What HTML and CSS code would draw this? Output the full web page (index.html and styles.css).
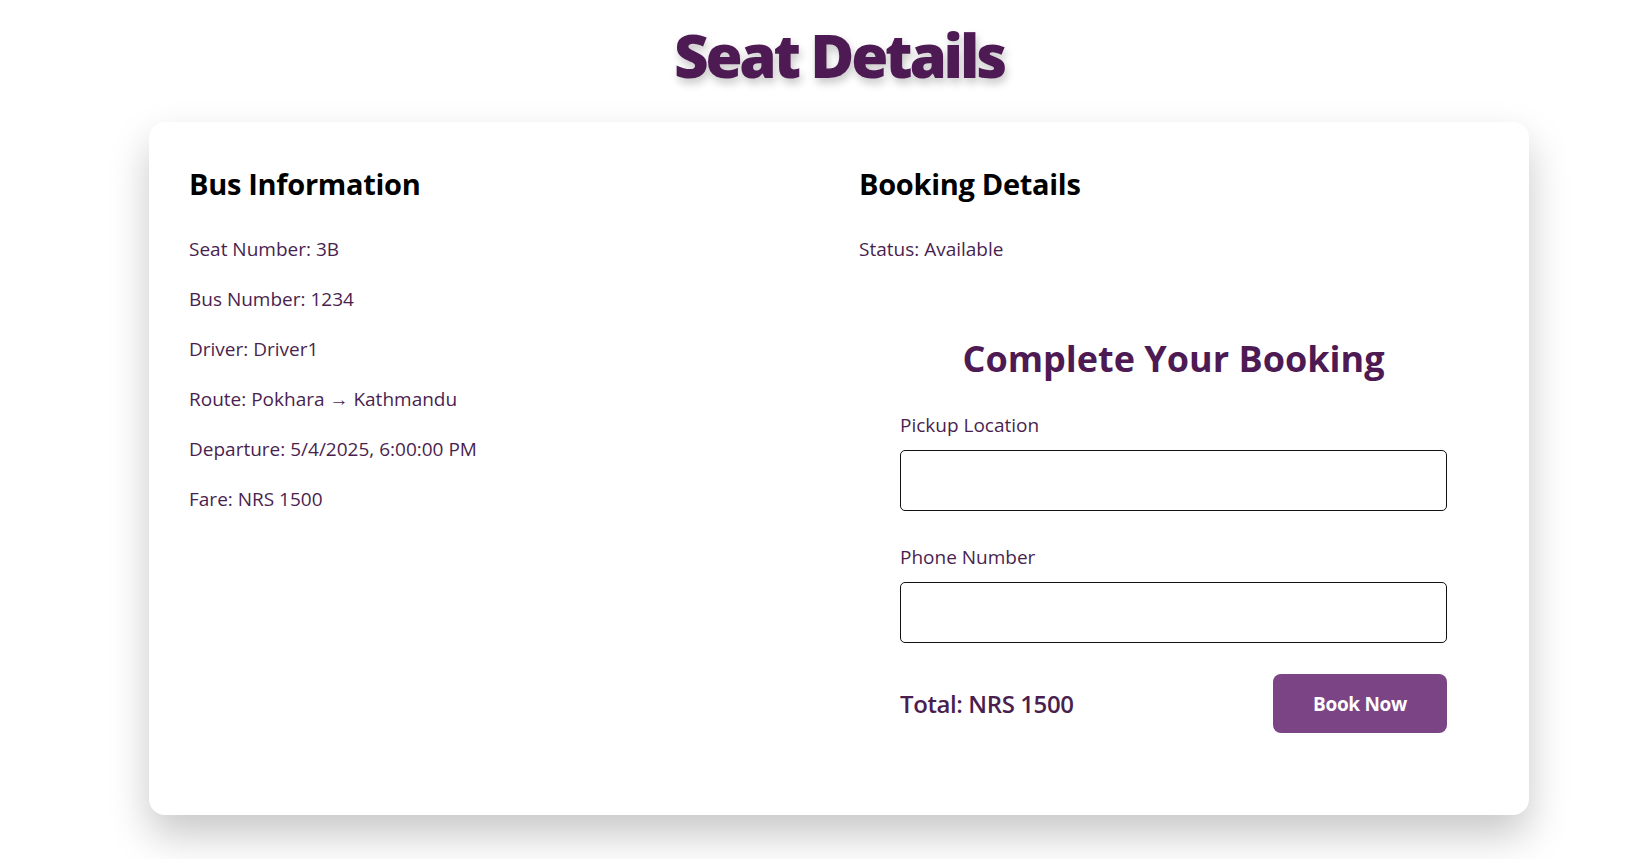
FILE: index.html
```html
<!DOCTYPE html>
<html lang="en">
<head>
<meta charset="utf-8">
<title>Seat Details</title>
<link rel="stylesheet" href="styles.css">
</head>
<body>
<div class="page">
  <h1 class="page-title">Seat Details</h1>
  <div class="card">
    <section class="col">
      <h2 class="col-title">Bus Information</h2>
      <p class="info">Seat Number: 3B</p>
      <p class="info">Bus Number: 1234</p>
      <p class="info">Driver: Driver1</p>
      <p class="info">Route: Pokhara → Kathmandu</p>
      <p class="info">Departure: 5/4/2025, 6:00:00 PM</p>
      <p class="info">Fare: NRS 1500</p>
    </section>
    <section class="col">
      <h2 class="col-title">Booking Details</h2>
      <p class="info">Status: Available</p>
      <form class="booking-form">
        <h3 class="form-title">Complete Your Booking</h3>
        <div class="field">
          <label class="field-label" for="pickup">Pickup Location</label>
          <input class="field-input" id="pickup" type="text">
        </div>
        <div class="field">
          <label class="field-label" for="phone">Phone Number</label>
          <input class="field-input" id="phone" type="tel">
        </div>
        <div class="form-footer">
          <span class="total">Total: NRS 1500</span>
          <button class="book-btn" type="button">Book Now</button>
        </div>
      </form>
    </section>
  </div>
</div>
</body>
</html>
```

FILE: styles.css
```css
* { box-sizing: border-box; }

html, body {
  background: #ffffff;
}

body {
  margin: 0;
  font-family: "Open Sans", "Noto Sans", sans-serif;
}

.page {
  padding: 0 103px 44px 149px;
}

.page-title {
  margin: 0;
  padding-top: 19px;
  height: 122px;
  text-align: center;
  font-size: 60px;
  line-height: 72px;
  font-weight: 800;
  letter-spacing: -3.2px;
  color: #4d1a53;
  text-shadow: 2px 5px 8px rgba(0, 0, 0, 0.22);
}

.card {
  background: #ffffff;
  border-radius: 16px;
  box-shadow: 0 20px 40px rgba(0, 0, 0, 0.22);
  padding: 44px 40px 40px;
  height: 693px;
  display: grid;
  grid-template-columns: 1fr 1fr;
  column-gap: 40px;
}

.col-title {
  margin: 0 0 32px;
  font-size: 29px;
  line-height: 36px;
  font-weight: 700;
  color: #000000;
  letter-spacing: -0.3px;
}

.info {
  margin: 0 0 20px;
  font-size: 19px;
  line-height: 30px;
  color: #4a1f50;
}

.booking-form {
  margin-top: 74px;
  padding: 0 42px 0 41px;
}

.form-title {
  margin: 0 0 30px;
  text-align: center;
  font-size: 36px;
  line-height: 42px;
  font-weight: 700;
  color: #4d1a53;
  letter-spacing: 0;
}

.field {
  display: flex;
  flex-direction: column;
  gap: 10px;
  margin-bottom: 31px;
}

.field-label {
  font-size: 19px;
  line-height: 30px;
  color: #4a1f50;
}

.field-input {
  height: 61px;
  border: 1.5px solid #111111;
  border-radius: 5px;
  font-size: 18px;
  padding: 0 12px;
  background: #ffffff;
}

.form-footer {
  display: flex;
  justify-content: space-between;
  align-items: center;
}

.total {
  font-size: 24px;
  font-weight: 600;
  color: #4a1f50;
  letter-spacing: -0.4px;
}

.book-btn {
  width: 174px;
  height: 59px;
  border: none;
  border-radius: 8px;
  background: #7b4585;
  color: #ffffff;
  font-family: inherit;
  font-size: 19px;
  font-weight: 700;
  letter-spacing: -0.3px;
}
```
